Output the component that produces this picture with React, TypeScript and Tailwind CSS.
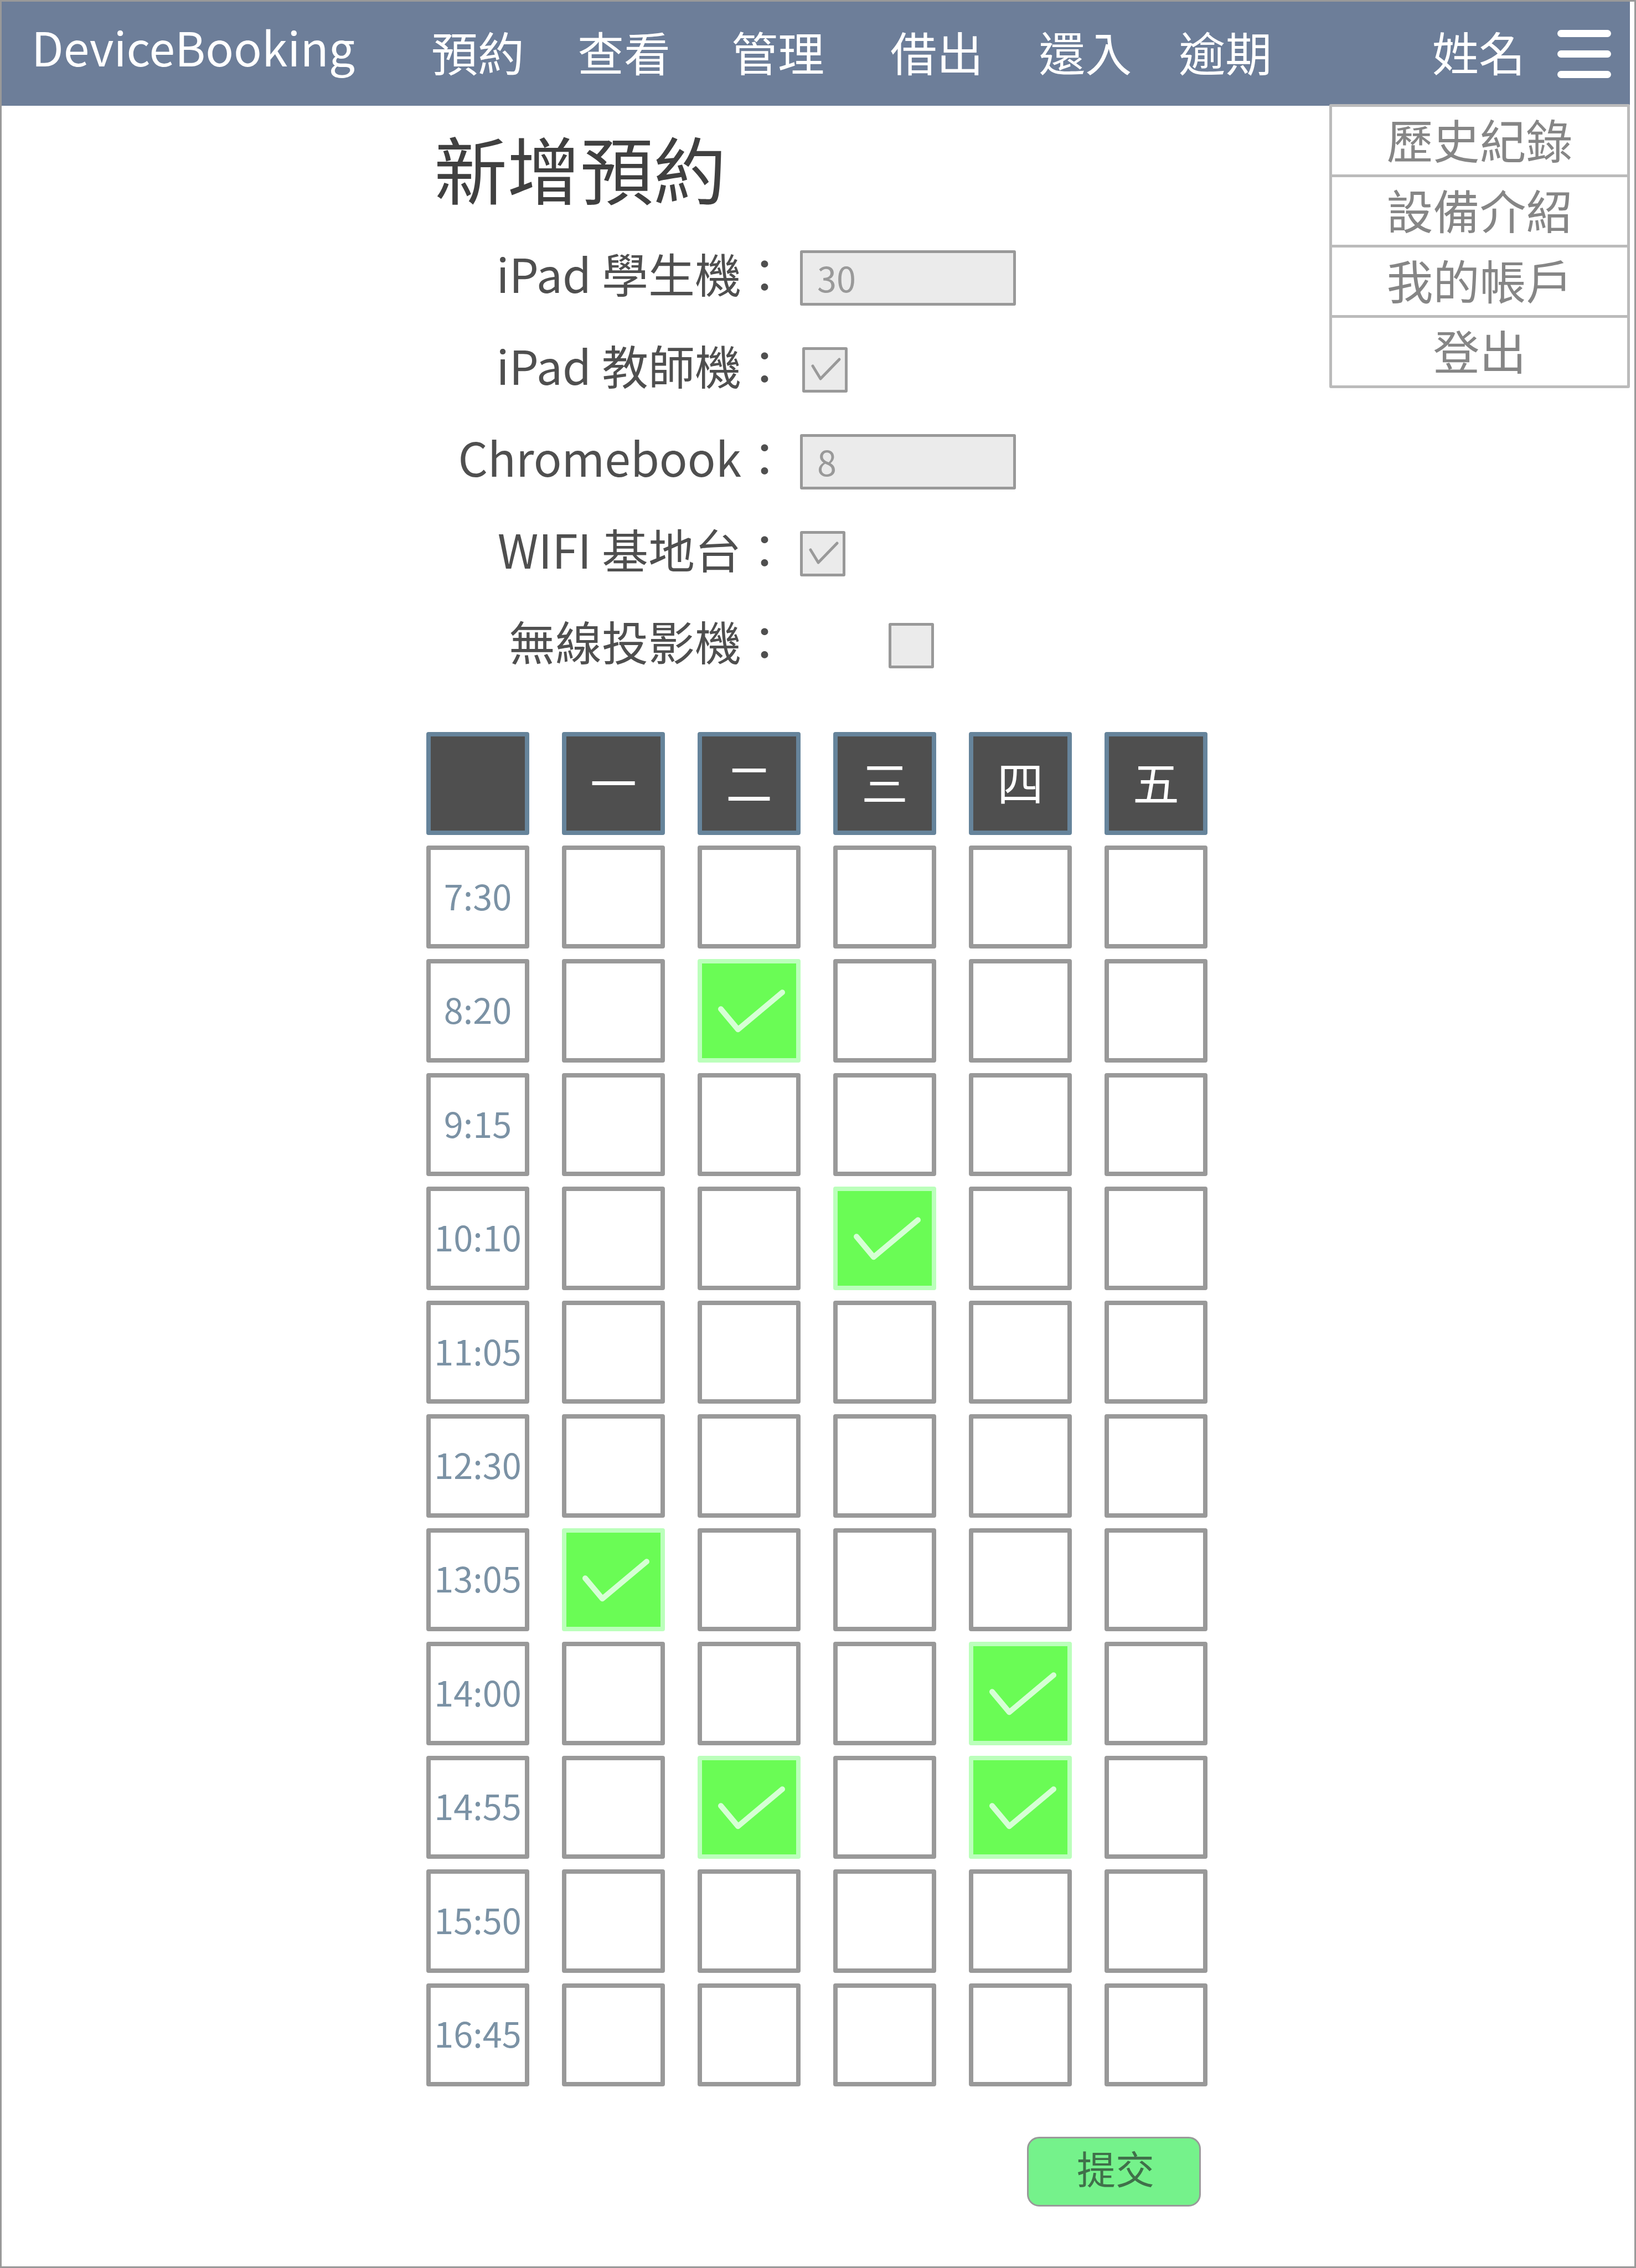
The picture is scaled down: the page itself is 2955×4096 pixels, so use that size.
const navItems = [
  { label: "預約", spacing: "" },
  { label: "查看", spacing: "ml-[96px]" },
  { label: "管理", spacing: "ml-[110px]" },
  { label: "借出", spacing: "ml-[119px]" },
  { label: "還入", spacing: "ml-[100px]" },
  { label: "逾期", spacing: "ml-[85px]" },
];

const menuItems = ["歷史紀錄", "設備介紹", "我的帳戶", "登出"];

const days = ["一", "二", "三", "四", "五"];

const periods: { time: string; booked: string[] }[] = [
  { time: "7:30", booked: [] },
  { time: "8:20", booked: ["二"] },
  { time: "9:15", booked: [] },
  { time: "10:10", booked: ["三"] },
  { time: "11:05", booked: [] },
  { time: "12:30", booked: [] },
  { time: "13:05", booked: ["一"] },
  { time: "14:00", booked: ["四"] },
  { time: "14:55", booked: ["二", "四"] },
  { time: "15:50", booked: [] },
  { time: "16:45", booked: [] },
];

function Header() {
  return (
    <header className="relative flex h-[188px] items-center bg-[#6d7e99] pl-[54px] pr-[34px] text-[84px] leading-none text-white">
      <a href="#" className="pb-[26px]">
        DeviceBooking
      </a>
      <nav className="ml-[138px] flex pb-2">
        {navItems.map((item) => (
          <a key={item.label} href="#" className={item.spacing}>
            {item.label}
          </a>
        ))}
      </nav>
      <div className="ml-auto flex items-center gap-[58px]">
        <span className="pb-2">姓名</span>
        <button type="button" aria-label="選單" className="flex flex-col gap-6">
          <span className="h-[13px] w-[97px] rounded-full bg-white" />
          <span className="h-[13px] w-[97px] rounded-full bg-white" />
          <span className="h-[13px] w-[97px] rounded-full bg-white" />
        </button>
      </div>
      <ul className="absolute right-0 top-full -mt-[3px] w-[543px] rounded-[3px] border-[5px] border-b-0 border-[#bbbbbb] bg-white text-[#868686]">
        {menuItems.map((label) => (
          <li key={label} className="border-b-[5px] border-[#bbbbbb]">
            <a href="#" className="flex h-[122px] items-center justify-center pb-1.5">
              {label}
            </a>
          </li>
        ))}
      </ul>
    </header>
  );
}

function FormLabel({ id, children }: { id: string; children: string }) {
  return (
    <label htmlFor={id} className="pb-[18px] text-right text-[84px] leading-none text-[#4f4f4f]">
      {children}
    </label>
  );
}

function CountField({ id, value }: { id: string; value: string }) {
  return (
    <input
      id={id}
      type="text"
      inputMode="numeric"
      defaultValue={value}
      className="h-[100px] w-[390px] rounded-[3px] border-[5px] border-[#999999] bg-[#ebebeb] pb-1 pl-[26px] text-[63px] leading-none text-[#999999] outline-none"
    />
  );
}

function OptionBox({ id, checked, className }: { id: string; checked: boolean; className: string }) {
  return (
    <span className={`relative block size-[82px] ${className}`}>
      <input
        id={id}
        type="checkbox"
        defaultChecked={checked}
        className="peer block size-full appearance-none rounded-[3px] border-[5px] border-[#999999] bg-[#ebebeb]"
      />
      <svg
        viewBox="0 0 82 82"
        aria-hidden="true"
        className="pointer-events-none absolute inset-0 hidden size-full fill-none stroke-[#999999] peer-checked:block"
      >
        <path d="M19 34 L33 57 L67 22" strokeWidth="5" strokeLinecap="round" strokeLinejoin="round" />
      </svg>
    </span>
  );
}

function Slot({ label, checked }: { label: string; checked: boolean }) {
  return (
    <td className="relative rounded-[4px] border-[8px] border-[#999999] p-0 has-[:checked]:border-[#bbffbb] has-[:checked]:bg-[#6afc55]">
      <input
        type="checkbox"
        aria-label={label}
        defaultChecked={checked}
        className="peer block h-[170px] w-full appearance-none"
      />
      <svg
        viewBox="0 0 170 170"
        aria-hidden="true"
        className="pointer-events-none absolute inset-0 hidden size-full fill-none stroke-[#d6ffd5] peer-checked:block"
      >
        <path d="M34 82 L65 119 L145 52" strokeWidth="10" strokeLinecap="round" strokeLinejoin="round" />
      </svg>
    </td>
  );
}

function Schedule() {
  return (
    <table className="mt-[87px] h-[2484px] w-full table-fixed border-separate border-spacing-x-[59px] border-spacing-y-[19px]">
      <thead>
        <tr>
          <td className="h-[186px] rounded-[4px] border-[8px] border-[#66849b] bg-[#4f4f4f]" />
          {days.map((day) => (
            <th
              key={day}
              scope="col"
              className="h-[186px] rounded-[4px] border-[8px] border-[#66849b] bg-[#4f4f4f] p-0 pb-2 text-[84px] font-normal leading-none text-white"
            >
              {day}
            </th>
          ))}
        </tr>
      </thead>
      <tbody>
        {periods.map(({ time, booked }) => (
          <tr key={time}>
            <th
              scope="row"
              className="h-[186px] rounded-[4px] border-[8px] border-[#999999] p-0 pb-2 text-center text-[63px] font-normal leading-none text-[#7b92a5]"
            >
              {time}
            </th>
            {days.map((day) => (
              <Slot key={day} label={`${day} ${time}`} checked={booked.includes(day)} />
            ))}
          </tr>
        ))}
      </tbody>
    </table>
  );
}

export default function App() {
  return (
    <div
      lang="zh-Hant"
      className="min-h-screen border-[3px] border-[#999999] bg-white pr-2 font-['Noto_Sans_CJK_TC',sans-serif]"
    >
      <Header />
      <main className="mx-auto w-[1533px] pl-1 pt-[45px]">
        <h1 className="pl-[73px] text-[132px] leading-none text-[#404040]">新增預約</h1>
        <form>
          <div className="mt-[84px] grid auto-rows-[100px] grid-cols-[712px_1fr] items-center gap-x-[22px] gap-y-[66px]">
            <FormLabel id="ipad-student">iPad 學生機：</FormLabel>
            <CountField id="ipad-student" value="30" />
            <FormLabel id="ipad-teacher">iPad 教師機：</FormLabel>
            <OptionBox id="ipad-teacher" checked className="ml-1" />
            <FormLabel id="chromebook">Chromebook：</FormLabel>
            <CountField id="chromebook" value="8" />
            <FormLabel id="wifi">WIFI 基地台：</FormLabel>
            <OptionBox id="wifi" checked className="" />
            <FormLabel id="projector">無線投影機：</FormLabel>
            <OptionBox id="projector" checked={false} className="ml-40" />
          </div>
          <Schedule />
          <div className="mt-[72px] flex justify-end pr-[71px]">
            <button
              type="submit"
              className="h-[126px] w-[314px] rounded-[22px] border-[3px] border-[#999999] bg-[#75f28b] pb-3.5 pl-1.5 text-[70px] leading-none text-[#40704a]"
            >
              提交
            </button>
          </div>
        </form>
      </main>
    </div>
  );
}
